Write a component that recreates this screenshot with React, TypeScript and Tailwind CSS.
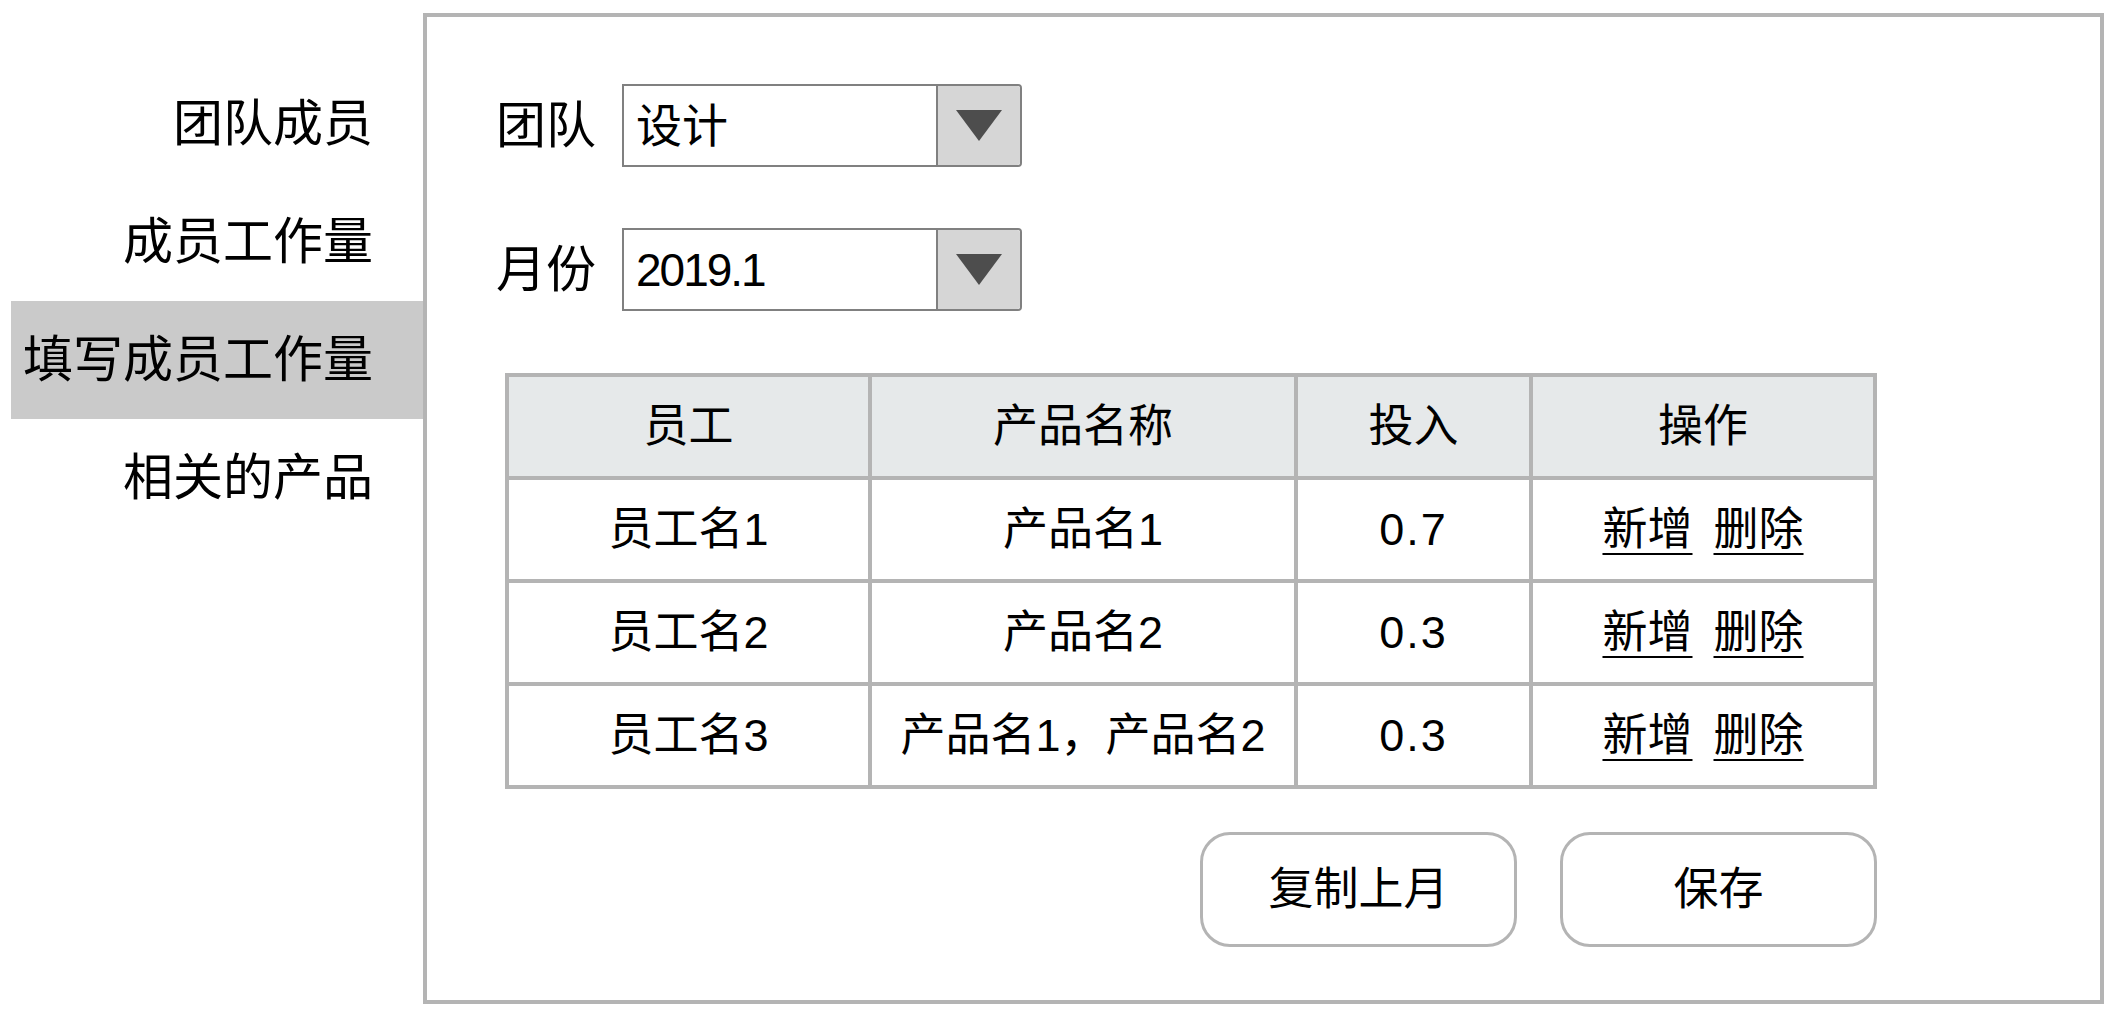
import React from 'react';

const menu = ['团队成员', '成员工作量', '填写成员工作量', '相关的产品'];

const rows = [
  { name: '员工名1', product: '产品名1', ratio: '0.7' },
  { name: '员工名2', product: '产品名2', ratio: '0.3' },
  { name: '员工名3', product: '产品名1，产品名2', ratio: '0.3' },
];

const cell =
  'flex items-center justify-center h-[103px] border-r-4 border-b-4 border-[#b4b4b4] text-[45px] leading-none';

const Select = ({ value, narrow }: { value: string; narrow?: boolean }) => (
  <div className="flex w-[400px] h-[83px] border-2 border-[#808080] rounded-r-[4px] bg-white">
    <div
      className={`flex-1 flex items-center pl-[12px] text-[46px] leading-none ${
        narrow ? 'tracking-[-2px]' : ''
      }`}
    >
      {value}
    </div>
    <div className="w-[84px] flex items-center justify-center bg-[#d6d6d6] border-l-2 border-[#808080] rounded-r-[3px]">
      <svg width="46" height="31" viewBox="0 0 46 31">
        <polygon points="0,0 46,0 23,31" fill="#4d4d4d" />
      </svg>
    </div>
  </div>
);

const FormRow = ({ label, children }: { label: string; children: React.ReactNode }) => (
  <div className="flex items-center h-[83px]">
    <span className="text-[50px] leading-none w-[126px]">{label}</span>
    {children}
  </div>
);

export default function App() {
  return (
    <div className="flex items-start w-[2116px] h-[1018px] bg-white text-black font-['Liberation_Sans','Noto_Sans_CJK_SC',sans-serif]">
      <nav className="ml-[11px] mt-[65px] w-[412px] flex flex-col">
        {menu.map((item) => (
          <div
            key={item}
            className={`h-[118px] flex items-center justify-end pr-[50px] text-[50px] leading-none ${
              item === '填写成员工作量' ? 'bg-[#cacaca]' : ''
            }`}
          >
            {item}
          </div>
        ))}
      </nav>

      <main className="mt-[13px] w-[1681px] h-[991px] border-4 border-[#b4b4b4] pt-[67px] pl-[69px]">
        <FormRow label="团队">
          <Select value="设计" />
        </FormRow>
        <div className="mt-[61px]">
          <FormRow label="月份">
            <Select value="2019.1" narrow />
          </FormRow>
        </div>

        <section className="mt-[62px] ml-[9px] w-[1372px]">
          <div className="grid grid-cols-[363px_426px_235px_344px] border-l-4 border-t-4 border-[#b4b4b4]">
            {['员工', '产品名称', '投入', '操作'].map((h) => (
              <div key={h} className={`${cell} bg-[#e6e9ea]`}>
                {h}
              </div>
            ))}
            {rows.map((r) => (
              <React.Fragment key={r.name}>
                <div className={cell}>{r.name}</div>
                <div className={cell}>{r.product}</div>
                <div className={`${cell} tracking-[2px]`}>{r.ratio}</div>
                <div className={`${cell} gap-[21px]`}>
                  <span className="underline underline-offset-[8px] decoration-[1.5px]">新增</span>
                  <span className="underline underline-offset-[8px] decoration-[1.5px]">删除</span>
                </div>
              </React.Fragment>
            ))}
          </div>

          <div className="mt-[43px] flex justify-end gap-[43px]">
            <button className="w-[317px] h-[115px] rounded-[30px] border-[3px] border-[#b4b4b4] text-[45px] leading-none">
              复制上月
            </button>
            <button className="w-[317px] h-[115px] rounded-[30px] border-[3px] border-[#b4b4b4] text-[45px] leading-none">
              保存
            </button>
          </div>
        </section>
      </main>
    </div>
  );
}
